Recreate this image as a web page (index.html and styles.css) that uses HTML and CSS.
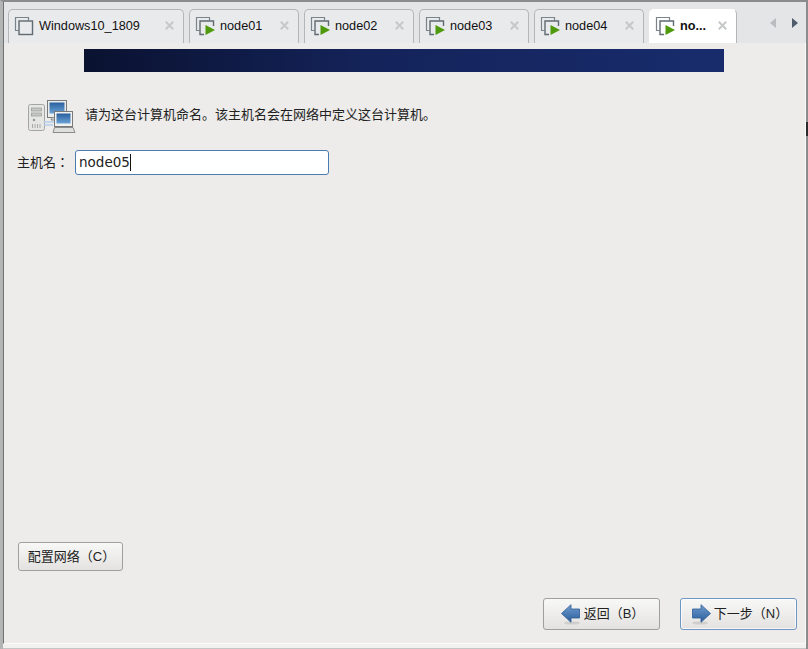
FILE: index.html
```html
<!DOCTYPE html>
<html lang="zh-CN">
<head>
  <meta charset="UTF-8" />
  <title>node05</title>
  <link rel="stylesheet" href="styles.css">
</head>
<body>
  <svg class="defs" width="0" height="0">
    <defs>
      <linearGradient id="screen" x1="0" y1="0" x2="0" y2="1">
        <stop offset="0" stop-color="#2a5f9e"/>
        <stop offset="1" stop-color="#6aa3d6"/>
      </linearGradient>
      <linearGradient id="arrow" x1="0" y1="0" x2="0" y2="1">
        <stop offset="0" stop-color="#6f9dd0"/>
        <stop offset="1" stop-color="#2c5d9c"/>
      </linearGradient>
    </defs>
    <symbol id="vm" viewBox="0 0 20 20">
      <path d="M4.5 14.5H1.5V1.5H14.5V4.5" fill="none" stroke="#7c848b" stroke-width="1.2"/>
      <rect x="5" y="5" width="13.5" height="13.5" fill="none" stroke="#5f6a73" stroke-width="1.4"/>
    </symbol>
    <symbol id="vm-on" viewBox="0 0 20 20">
      <path d="M4.5 14.5H1.5V1.5H14.5V4.5" fill="none" stroke="#7c848b" stroke-width="1.2"/>
      <path d="M9 18.5H5V5H18.5V10" fill="none" stroke="#5f6a73" stroke-width="1.4"/>
      <path d="M10.5 9L20 14L10.5 19Z" fill="#4f9a0c"/>
    </symbol>
    <symbol id="close" viewBox="0 0 9 9">
      <path d="M0.8 0.8L8.2 8.2M8.2 0.8L0.8 8.2" stroke="#c6c8ca" stroke-width="2"/>
    </symbol>
  </svg>

  <div class="window">
    <div class="tabbar">
      <div class="tab tab-wide"><svg class="tab-icon"><use href="#vm"/></svg><span class="tab-name">Windows10_1809</span><span class="tab-close"><svg width="9" height="9"><use href="#close"/></svg></span></div>
      <div class="tab"><svg class="tab-icon"><use href="#vm-on"/></svg><span class="tab-name">node01</span><span class="tab-close"><svg width="9" height="9"><use href="#close"/></svg></span></div>
      <div class="tab"><svg class="tab-icon"><use href="#vm-on"/></svg><span class="tab-name">node02</span><span class="tab-close"><svg width="9" height="9"><use href="#close"/></svg></span></div>
      <div class="tab"><svg class="tab-icon"><use href="#vm-on"/></svg><span class="tab-name">node03</span><span class="tab-close"><svg width="9" height="9"><use href="#close"/></svg></span></div>
      <div class="tab"><svg class="tab-icon"><use href="#vm-on"/></svg><span class="tab-name">node04</span><span class="tab-close"><svg width="9" height="9"><use href="#close"/></svg></span></div>
      <div class="tab tab-active"><svg class="tab-icon"><use href="#vm-on"/></svg><span class="tab-name">no...</span><span class="tab-close"><svg width="9" height="9"><use href="#close"/></svg></span></div>
      <div class="tab-arrows">
        <span class="arrow arrow-left"></span>
        <span class="arrow arrow-right"></span>
      </div>
    </div>

    <div class="installer">
      <div class="banner"></div>

      <div class="intro">
        <svg class="intro-icon" width="50" height="34" viewBox="0 0 50 34">
          <rect x="1.5" y="4.5" width="16" height="26" rx="2" fill="#e6e7e4" stroke="#a3a5a1"/>
          <rect x="4.5" y="8" width="10" height="3" fill="#c6c8c4" stroke="#8d8f8b" stroke-width=".6"/>
          <rect x="4.5" y="13" width="10" height="3" fill="#c6c8c4" stroke="#8d8f8b" stroke-width=".6"/>
          <circle cx="7" cy="20" r="1.3" fill="#9a9c98"/>
          <path d="M5.5 24V28M8 24V28M10.5 24V28M13 24V28" stroke="#a9aba7"/>
          <path d="M17 22H27M17 25H26" stroke="#b4cdea" stroke-width="1.4"/>
          <rect x="20.5" y="0.5" width="19" height="17" fill="#eceded" stroke="#77797a"/>
          <rect x="22.5" y="2.5" width="15" height="11" fill="url(#screen)"/>
          <path d="M25 17.5H35L36 20H24Z" fill="#d4d5d3" stroke="#8b8d8c"/>
          <rect x="27.5" y="11.5" width="18" height="15" fill="#f0f1f1" stroke="#77797a"/>
          <rect x="29.5" y="13.5" width="14" height="10" fill="url(#screen)"/>
          <path d="M27.5 27.5H46L48 32.5H26Z" fill="#dedfdd" stroke="#8b8d8c"/>
        </svg>
        <p class="intro-text">请为这台计算机命名。该主机名会在网络中定义这台计算机。</p>
      </div>

      <div class="host-row">
        <label class="host-label" for="hostname" lang="zh-TW">主机名：</label>
        <div class="host-input" id="hostname">node05<span class="caret"></span></div>
      </div>

      <div class="spacer"></div>

      <div class="config-row">
        <button class="btn btn-config"><span>配置网络（C）</span></button>
      </div>

      <div class="nav-row">
        <button class="btn btn-nav">
          <svg width="20" height="21" viewBox="0 0 20 21"><ellipse cx="11" cy="19" rx="8" ry="1.6" fill="#cfcecc"/><path d="M0.5 9.5L10 0.7V5H18.5V14H10V18.3Z" fill="url(#arrow)" stroke="#2d5a92" stroke-width=".8"/></svg>
          <span>返回（B）</span>
        </button>
        <button class="btn btn-nav btn-focus">
          <svg width="20" height="21" viewBox="0 0 20 21"><ellipse cx="9" cy="19" rx="8" ry="1.6" fill="#cfcecc"/><path d="M19.5 9.5L10 0.7V5H1.5V14H10V18.3Z" fill="url(#arrow)" stroke="#2d5a92" stroke-width=".8"/></svg>
          <span>下一步（N）</span>
        </button>
      </div>
    </div>
    <div class="statusline"></div>
    <div class="edge-mark"></div>
  </div>
</body>
</html>
```

FILE: styles.css
```css
html, body {
  margin: 0;
  height: 100%;
  overflow: hidden;
}
body {
  background: #f4f4f3;
  font-family: "Liberation Sans", "Noto Sans CJK SC", sans-serif;
  font-size: 13px;
  color: #222;
}
.defs {
  display: block;
  height: 0;
}
.window {
  position: relative;
  width: 808px;
  height: 649px;
  box-sizing: border-box;
  display: flex;
  flex-direction: column;
  border-top: 2px solid #8b8d8d;
  border-left: 3px solid #b3b4b4;
  border-right: 2px solid #8b8d8d;
}
.edge-mark {
  position: absolute;
  top: 120px;
  right: -2px;
  width: 2px;
  height: 14px;
  background: #2b2b2b;
}
.tabbar {
  height: 41px;
  box-sizing: border-box;
  padding: 7px 0 0 4px;
  display: flex;
  gap: 5px;
  background: #e4e5e7;
  border-left: 1px solid #6f7172;
  flex: none;
}
.tab {
  width: 110px;
  height: 34px;
  box-sizing: border-box;
  padding: 6px 0 0 5px;
  display: flex;
  background: #e9eaec;
  border: 1px solid #b4b6b8;
  border-bottom: none;
  border-radius: 5px 5px 0 0;
  font-size: 12.7px;
  color: #111;
}
.tab-wide {
  width: 176px;
}
.tab-active {
  width: 88px;
  background: #fff;
  border-color: #fff #b4b6b8 #fff #fff;
  font-weight: bold;
}
.tab-icon {
  width: 20px;
  height: 20px;
  flex: none;
}
.tab-name {
  margin-left: 5px;
  line-height: 20px;
  white-space: nowrap;
  flex: 1;
}
.tab-close {
  width: 20px;
  margin-right: 4px;
  padding-top: 5px;
  text-align: center;
}
.tab-close svg {
  display: block;
  margin: 0 auto;
}
.tab-arrows {
  display: flex;
  gap: 16px;
  margin: 9px 0 0 28px;
}
.arrow {
  width: 0;
  height: 0;
  border-top: 5.5px solid transparent;
  border-bottom: 5.5px solid transparent;
}
.arrow-left {
  border-right: 6px solid #b9bcbf;
}
.arrow-right {
  border-left: 6px solid #4f5d6b;
}
.installer {
  flex: 1;
  display: flex;
  flex-direction: column;
  background: #edecea;
  border-left: 1px solid #6f7172;
  border-right: 1px solid #fafafa;
  border-bottom: 1px solid #fafafa;
}
.banner {
  flex: none;
  width: 640px;
  height: 23px;
  margin: 6px 0 0 80px;
  background: linear-gradient(90deg, #0a1230 0%, #14235a 45%, #182c6c 100%);
}
.intro {
  display: flex;
  align-items: center;
  margin: 28px 0 0 23px;
}
.intro-text {
  margin: -8px 0 0 8px;
}
.host-row {
  display: flex;
  align-items: center;
  margin: 16px 0 0 13px;
}
.host-label {
  width: 58px;
  margin-top: -2px;
  font-family: "Noto Sans CJK TC", sans-serif;
}
.host-input {
  width: 254px;
  height: 25px;
  box-sizing: border-box;
  padding-left: 3px;
  background: #fff;
  border: 1px solid #4a7cb0;
  border-radius: 3px;
  font-family: "DejaVu Sans", sans-serif;
  font-size: 13.5px;
  line-height: 23px;
}
.caret {
  display: inline-block;
  width: 1px;
  height: 17px;
  background: #111;
  vertical-align: -4px;
}
.spacer {
  flex: 1;
}
.btn {
  display: flex;
  align-items: center;
  justify-content: center;
  box-sizing: border-box;
  padding: 0;
  background: linear-gradient(#f8f8f7, #e3e2e0);
  border: 1px solid #a09f9d;
  border-radius: 3px;
  font-family: inherit;
  font-size: 13px;
  color: #222;
}
.btn span {
  margin-bottom: 3px;
}
.config-row {
  margin-left: 14px;
}
.btn-config {
  width: 105px;
  height: 29px;
  padding-left: 2px;
}
.btn-config span {
  margin-bottom: 2px;
}
.nav-row {
  display: flex;
  justify-content: flex-end;
  gap: 20px;
  margin: 27px 8px 13px 0;
}
.btn-nav {
  width: 117px;
  height: 32px;
  gap: 3px;
  padding-left: 2px;
}
.btn-focus {
  border-color: #6d97c4;
  box-shadow: inset 0 0 0 1px rgba(255, 255, 255, 0.7);
}
.statusline {
  height: 5px;
  box-sizing: border-box;
  flex: none;
  background: #f1f1f0;
  border-bottom: 1px solid #c4c5c5;
}
```
